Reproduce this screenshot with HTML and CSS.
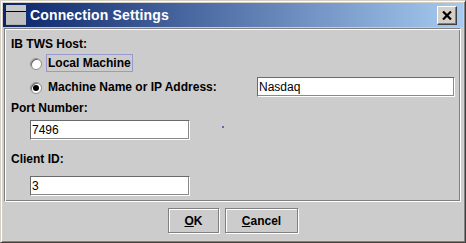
FILE: index.html
```html
<!DOCTYPE html>
<html lang="en">
<head>
    <meta charset="UTF-8">
    <title>Connection Settings</title>
    <link rel="stylesheet" href="styles.css">
</head>
<body>
    <div class="dialog">
        <div class="titlebar">
            <span class="app-icon"></span>
            <span class="title">Connection Settings</span>
            <button class="close-btn" title="Close">
                <svg width="10" height="9" viewBox="0 0 10 9">
                    <path d="M1 0.5 L9 8.5 M9 0.5 L1 8.5" stroke="#000" stroke-width="2.2" fill="none"/>
                </svg>
            </button>
        </div>
        <div class="content">
            <div class="panel">
                <div class="row label-row">IB TWS Host:</div>

                <div class="row radio-row first-radio">
                    <span class="radio"></span>
                    <span class="radio-text focused">Local Machine</span>
                </div>

                <div class="row radio-row second-radio">
                    <span class="radio checked"></span>
                    <span class="radio-text wide">Machine Name or IP Address:</span>
                    <input class="field host-field" type="text" value="Nasdaq">
                </div>

                <div class="row label-row port-label">Port Number:</div>
                <div class="row field-row port-row">
                    <input class="field" type="text" value="7496">
                    <span class="dot"></span>
                </div>

                <div class="row label-row client-label">Client ID:</div>
                <div class="row field-row client-row">
                    <input class="field" type="text" value="3">
                </div>
            </div>
            <div class="actions">
                <button class="btn ok-btn"><u>O</u>K</button>
                <button class="btn cancel-btn"><u>C</u>ancel</button>
            </div>
        </div>
    </div>
</body>
</html>
```
FILE: styles.css
```css
* {
    box-sizing: border-box;
}
body {
    margin: 0;
    background: #d4d0c8;
    font-family: "Liberation Sans", Arial, sans-serif;
    font-size: 12px;
    color: #000;
}
.dialog {
    width: 466px;
    height: 243px;
    background: #d4d0c8;
    border: 1px solid;
    border-color: #d4d0c8 #404040 #404040 #d4d0c8;
    box-shadow: inset 1px 1px 0 #fff, inset -1px -1px 0 #808080;
    padding: 2px;
    display: flex;
    flex-direction: column;
}
.titlebar {
    height: 24px;
    display: flex;
    align-items: center;
    padding: 0 3px 0 3px;
    background: linear-gradient(to right, #0a246a, #a6caf0);
}
.app-icon {
    width: 20px;
    height: 20px;
    background: #c0c0c0;
    border-top: 6px solid #c8c8c8;
    box-shadow: inset 0 1px 0 #000;
    border-bottom: 1px solid #b0b0b0;
}
.title {
    margin-left: 4px;
    color: #fff;
    font-weight: bold;
    font-size: 14px;
    letter-spacing: 0.15px;
    flex: 1;
}
.close-btn {
    width: 20px;
    height: 19px;
    padding: 0;
    margin-right: 3px;
    background: #d4d0c8;
    border: 1px solid;
    border-color: #fff #404040 #404040 #fff;
    box-shadow: inset -1px -1px 0 #808080;
    display: flex;
    align-items: center;
    justify-content: center;
}
.content {
    flex: 1;
    background: #cccccc;
    padding: 1px 2px 0 1px;
    display: flex;
    flex-direction: column;
}
.panel {
    height: 174px;
    border: 1px solid;
    border-color: #808080 #fff #fff #808080;
    box-shadow: inset 1px 1px 0 #fff, inset -1px -1px 0 #808080;
    padding: 7px 0 0 6px;
}
.row {
    display: flex;
    align-items: center;
}
.label-row {
    height: 16px;
    font-weight: bold;
}
.radio-row {
    padding-left: 19px;
    font-weight: bold;
}
.first-radio {
    height: 18px;
    margin-top: 2px;
}
.second-radio {
    height: 20px;
    margin-top: 5px;
}
.radio {
    flex-shrink: 0;
    width: 12px;
    height: 12px;
    border-radius: 50%;
    background: #fff;
    border: 1px solid #8c8c8c;
    box-shadow: inset 1px 1px 0 #6a6a6a;
    display: flex;
    align-items: center;
    justify-content: center;
    margin-top: 1px;
}
.radio.checked::after {
    content: "";
    width: 6px;
    height: 6px;
    border-radius: 50%;
    background: #000;
}
.radio-text {
    flex-shrink: 0;
    margin-left: 4px;
    padding: 0 1px;
    line-height: 16px;
    border: 1px solid transparent;
}
.radio-text.focused {
    border-color: #9999cc;
}
.radio-text.wide {
    width: 211px;
}
.field {
    flex-shrink: 0;
    width: 160px;
    height: 20px;
    margin: 0;
    padding: 0 0 0 1px;
    font-family: "Liberation Sans", Arial, sans-serif;
    font-size: 12px;
    color: #000;
    background: #fff;
    border: 1px solid;
    border-color: #6a6a6a #fff #fff #6a6a6a;
    box-shadow: inset -1px -1px 0 #8a8a8a;
    outline: none;
}
.host-field {
    width: 198px;
}
.field-row {
    height: 20px;
    padding-left: 19px;
}
.port-label {
    margin-top: 3px;
}
.port-row {
    margin-top: 4px;
}
.client-label {
    margin-top: 11px;
}
.client-row {
    margin-top: 9px;
}
.dot {
    width: 2px;
    height: 2px;
    background: #6666aa;
    margin: 0 0 6px 32px;
}
.actions {
    display: flex;
    justify-content: center;
    gap: 6px;
    padding-top: 6px;
    padding-left: 1px;
}
.btn {
    height: 25px;
    padding: 0;
    font-family: "Liberation Sans", Arial, sans-serif;
    font-size: 12px;
    font-weight: bold;
    color: #000;
    background: #cccccc;
    border: 1px solid #808080;
    box-shadow: inset 1px 1px 0 #fff, 1px 1px 0 #fff;
}
.ok-btn {
    width: 51px;
}
.cancel-btn {
    width: 73px;
}
```
